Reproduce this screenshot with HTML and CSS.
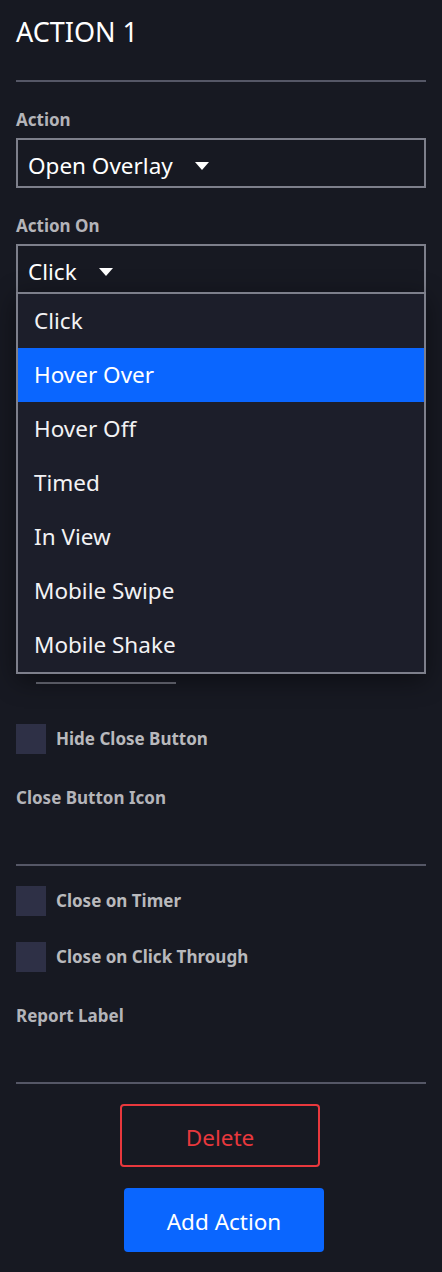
FILE: index.html
```html
<!DOCTYPE html>
<html lang="en">
  <head>
    <meta charset="UTF-8" />
    <meta name="viewport" content="width=device-width, initial-scale=1.0" />
    <title>Action 1</title>
    <link rel="stylesheet" href="styles.css">
  </head>
  <body>
    <div class="panel">
      <h1 class="title">ACTION 1</h1>
      <div class="divider"></div>

      <div class="field-label">Action</div>
      <div class="select">
        <span>Open Overlay</span>
        <svg class="caret" width="14" height="8" viewBox="0 0 14 8"><polygon points="0,0 14,0 7,8" fill="#ffffff" /></svg>
      </div>

      <div class="field-label">Action On</div>
      <div class="select-wrap">
        <div class="select">
          <span>Click</span>
          <svg class="caret" width="14" height="8" viewBox="0 0 14 8"><polygon points="0,0 14,0 7,8" fill="#ffffff" /></svg>
        </div>
        <ul class="menu">
          <li>Click</li>
          <li class="active">Hover Over</li>
          <li>Hover Off</li>
          <li>Timed</li>
          <li>In View</li>
          <li>Mobile Swipe</li>
          <li>Mobile Shake</li>
        </ul>
      </div>

      <!-- fields behind the open menu -->
      <div class="covered">
        <div class="covered-line"></div>
      </div>

      <label class="check first">
        <span class="box"></span>
        <span>Hide Close Button</span>
      </label>

      <div class="field-label gap-lg">Close Button Icon</div>
      <div class="divider gap-xl"></div>

      <label class="check after-rule">
        <span class="box"></span>
        <span>Close on Timer</span>
      </label>
      <label class="check">
        <span class="box"></span>
        <span>Close on Click Through</span>
      </label>

      <div class="field-label gap-lg">Report Label</div>
      <div class="divider gap-xl"></div>

      <button class="btn btn-delete">Delete</button>
      <button class="btn btn-add">Add Action</button>
    </div>
  </body>
</html>
```

FILE: styles.css
```css
body {
  margin: 0;
  background: #171922;
  color: #ffffff;
  font-family: 'Noto Sans', 'Open Sans', sans-serif;
}

.panel {
  padding: 0 16px 20px;
}

.title {
  margin: 14px 0 0;
  font-size: 27px;
  line-height: 36px;
  font-weight: 400;
}

.divider {
  height: 2px;
  margin-top: 30px;
  background: #555766;
}

.divider.gap-xl {
  margin-top: 56px;
}

.field-label {
  margin-top: 28px;
  font-size: 17px;
  line-height: 20px;
  font-weight: 700;
  color: #b4b4b9;
}

.field-label.gap-lg {
  margin-top: 34px;
}

.select {
  display: flex;
  align-items: center;
  box-sizing: border-box;
  height: 50px;
  margin-top: 8px;
  padding: 6px 10px 0;
  border: 2px solid #7d7f8b;
  font-size: 22.5px;
  line-height: 30px;
}

.caret {
  margin-left: 22px;
}

.select-wrap {
  position: relative;
}

.menu {
  position: absolute;
  top: calc(100% - 2px);
  left: 0;
  right: 0;
  z-index: 2;
  margin: 0;
  padding: 0;
  list-style: none;
  background: #1c1e2a;
  border: 2px solid #7d7f8b;
  box-shadow: 0 6px 24px rgba(0, 0, 0, 0.45);
}

.menu li {
  height: 54px;
  padding-left: 16px;
  font-size: 22.5px;
  line-height: 54px;
  color: #f2f2f4;
}

.menu li.active {
  background: #0a66ff;
  color: #ffffff;
}

.covered {
  padding-top: 388px;
}

.covered-line {
  width: 140px;
  height: 2px;
  margin-left: 20px;
  background: #6a6c78;
}

.check {
  display: flex;
  align-items: center;
  gap: 10px;
  margin-top: 26px;
  font-size: 17px;
  line-height: 20px;
  font-weight: 700;
  color: #b9b9bd;
}

.check.first {
  margin-top: 40px;
}

.check.after-rule {
  margin-top: 20px;
}

.box {
  width: 30px;
  height: 30px;
  background: #2e3046;
}

.btn {
  display: flex;
  align-items: center;
  justify-content: center;
  box-sizing: border-box;
  width: 200px;
  font-family: inherit;
  font-size: 22.5px;
  line-height: 30px;
  border-radius: 4px;
  cursor: pointer;
}

.btn-delete {
  height: 63px;
  margin: 20px 0 0 104px;
  padding: 5px 0 0;
  background: transparent;
  border: 2px solid #e8383d;
  color: #e8383d;
}

.btn-add {
  height: 64px;
  margin: 21px 0 0 108px;
  padding: 3px 0 0;
  background: #0a66ff;
  border: none;
  color: #ffffff;
}
```
